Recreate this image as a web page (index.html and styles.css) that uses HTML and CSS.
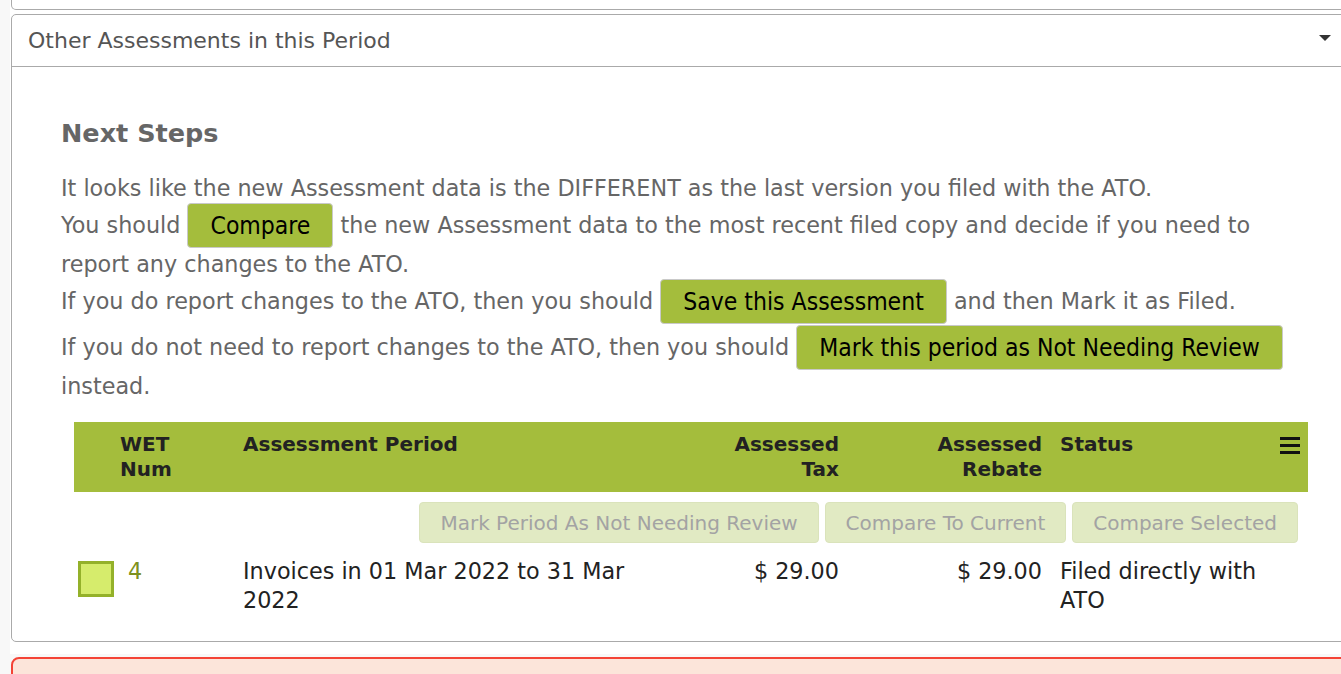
FILE: index.html
```html
<!DOCTYPE html>
<html lang="en">

<head>
    <meta charset="UTF-8">
    <meta name="viewport" content="width=device-width, initial-scale=1.0">
    <title>Assessments</title>
    <link rel="stylesheet" href="styles.css">
</head>

<body>
    <div class="main">
        <div class="prev-panel"></div>

        <div class="panel">
            <div class="panel-header">
                <span>Other Assessments in this Period</span>
                <span class="caret"></span>
            </div>
            <div class="panel-body">
                <h2 class="steps-title">Next Steps</h2>
                <p class="steps-text">
                    It looks like the new Assessment data is the DIFFERENT as the last version you filed with the ATO.<br>
                    You should <button class="green-btn">Compare</button> the new Assessment data to the most recent filed copy and decide if you need to report any changes to the ATO.<br>
                    If you do report changes to the ATO, then you should <button class="green-btn">Save this Assessment</button> and then Mark it as Filed.<br>
                    If you do not need to report changes to the ATO, then you should <button class="green-btn">Mark this period as Not Needing Review</button> instead.
                </p>

                <div class="wet-table">
                    <div class="wet-head">
                        <div class="cell"></div>
                        <div class="cell col-num">WET Num</div>
                        <div class="cell col-period">Assessment Period</div>
                        <div class="cell col-tax">Assessed Tax</div>
                        <div class="cell col-rebate">Assessed Rebate</div>
                        <div class="cell col-status">Status</div>
                        <div class="cell col-menu">
                            <svg width="20" height="17" viewBox="0 0 20 17">
                                <rect x="0" y="0" width="20" height="3" fill="#111"/>
                                <rect x="0" y="7" width="20" height="3" fill="#111"/>
                                <rect x="0" y="14" width="20" height="3" fill="#111"/>
                            </svg>
                        </div>
                    </div>

                    <div class="wet-actions">
                        <button class="faded-btn" disabled>Mark Period As Not Needing Review</button>
                        <button class="faded-btn" disabled>Compare To Current</button>
                        <button class="faded-btn" disabled>Compare Selected</button>
                    </div>

                    <div class="wet-row">
                        <div class="cell"><span class="check-box"></span></div>
                        <div class="cell col-num wet-num">4</div>
                        <div class="cell col-period">Invoices in 01 Mar 2022 to 31 Mar 2022</div>
                        <div class="cell col-tax">$ 29.00</div>
                        <div class="cell col-rebate">$ 29.00</div>
                        <div class="cell col-status">Filed directly with ATO</div>
                        <div class="cell col-menu"></div>
                    </div>
                </div>
            </div>
        </div>

        <div class="alert-box"></div>
    </div>
</body>

</html>
```

FILE: styles.css
```css
body {
    margin: 0;
    padding: 0;
    background-color: #f8f8f8;
    font-family: 'DejaVu Sans', Verdana, sans-serif;
    color: #666;
    overflow: hidden;
    height: 674px;
}

.main {
    margin-left: 10px;
    padding-left: 1px;
    background: #fff;
    height: 674px;
}

.prev-panel {
    width: 1340px;
    height: 30px;
    margin-top: -20px;
    border: 1px solid #aaa;
    border-top: none;
    border-radius: 0 0 5px 5px;
    box-sizing: border-box;
}

.panel {
    width: 1340px;
    margin-top: 4px;
    border: 1px solid #aaa;
    border-radius: 5px;
    box-sizing: border-box;
}

.panel-header {
    display: flex;
    justify-content: space-between;
    align-items: center;
    height: 51px;
    padding: 0 19px 0 16px;
    border-bottom: 1px solid #aaa;
    font-size: 22px;
    color: #555;
}

.caret {
    width: 0;
    height: 0;
    border-left: 6px solid transparent;
    border-right: 6px solid transparent;
    border-top: 6px solid #333;
    margin-top: -6px;
}

.panel-body {
    padding: 50px 49px 26px;
}

.steps-title {
    margin: 0 0 24px;
    font-size: 25.5px;
    line-height: 32px;
    font-weight: bold;
    color: #666;
}

.steps-text {
    margin: 0;
    font-size: 22.3px;
    line-height: 30px;
    color: #666;
}

.green-btn {
    display: inline-block;
    vertical-align: middle;
    height: 45px;
    margin: 0 0 1px;
    padding: 0 22px;
    font-family: 'DejaVu Sans Condensed', 'DejaVu Sans', sans-serif;
    font-size: 24.5px;
    color: #000;
    background: #a4bd3c;
    border: 1px solid #c9c9c9;
    border-radius: 4px;
}

.wet-table {
    width: 1234px;
    margin: 21px 0 0 13px;
}

.wet-head,
.wet-row {
    display: grid;
    grid-template-columns: 46px 123px 476px 120px 203px 238px 28px;
}

.wet-head {
    background: #a4bd3c;
    padding: 10px 0;
    font-size: 20px;
    line-height: 25px;
    font-weight: bold;
    color: #222;
}

.col-num {
    padding-right: 30px;
}

.col-period {
    padding-right: 60px;
}

.col-tax {
    text-align: right;
}

.col-rebate {
    text-align: right;
    padding-left: 40px;
}

.col-status {
    padding-left: 18px;
}

.col-menu svg {
    display: block;
    margin-top: 5px;
}

.wet-actions {
    display: flex;
    justify-content: flex-end;
    gap: 6px;
    padding: 10px 10px 0 0;
}

.faded-btn {
    height: 41px;
    padding: 0 20px;
    font-family: 'DejaVu Sans', Verdana, sans-serif;
    font-size: 20px;
    color: #a3a3a3;
    background: #e1eac3;
    border: 1px solid #dae3bb;
    border-radius: 4px;
}

.wet-row {
    padding: 14px 0 0;
    font-size: 22.3px;
    line-height: 29px;
    color: #222;
}

.check-box {
    display: block;
    width: 30px;
    height: 30px;
    margin: 4px 0 0 4px;
    border: 3px solid #94b12a;
    background: #d6ec6c;
}

.wet-num {
    padding-left: 8px;
    color: #7d9120;
}

.alert-box {
    width: 1340px;
    height: 40px;
    margin-top: 15px;
    border: 2px solid #f44336;
    border-radius: 8px;
    background: #fce5da;
}
```
